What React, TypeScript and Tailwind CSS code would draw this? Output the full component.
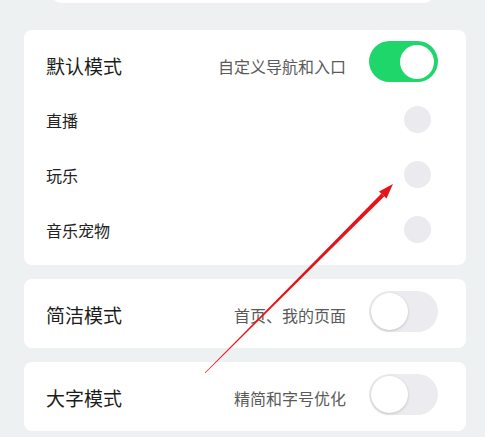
const font = { fontFamily: '"Noto Sans CJK SC", "Noto Sans", sans-serif' };

function Toggle({ on, className = "" }: { on: boolean; className?: string }) {
  if (on) {
    return (
      <div className={`flex h-[41px] w-[69px] shrink-0 items-center justify-end rounded-full bg-[#1fd66a] pr-[4px] ${className}`}>
        <div className="h-[34px] w-[34px] rounded-full bg-white" />
      </div>
    );
  }
  return (
    <div className={`flex h-[41px] w-[69px] shrink-0 items-center rounded-full bg-[#ececf0] pl-[2px] ${className}`}>
      <div className="h-[37px] w-[37px] rounded-full bg-white shadow-[0_1px_3px_rgba(0,0,0,0.18)]" />
    </div>
  );
}

function SubRow({ label }: { label: string }) {
  return (
    <div className="flex h-[55px] items-center pl-[22px] pr-[35px]">
      <span className="text-[16px] text-[#222]">{label}</span>
      <div className="ml-auto h-[27px] w-[27px] rounded-full bg-[#ebebef]" />
    </div>
  );
}

function ModeCard({ title, desc }: { title: string; desc: string }) {
  return (
    <div className="flex h-[69px] items-center rounded-[8px] bg-white pl-[22px] pr-[28px]">
      <span className="mt-[3px] text-[19px] text-[#1c1c1c]">{title}</span>
      <span className="ml-auto mr-[23px] mt-[3px] text-[16px] text-[#5a5a5a]">{desc}</span>
      <Toggle on={false} className="-mt-[4px]" />
    </div>
  );
}

export default function App() {
  return (
    <div className="relative h-[437px] w-[485px] overflow-hidden bg-[#eef1f1]" style={font}>
      <div className="mx-[50px] -mt-[20px] h-[23px] rounded-[14px] bg-white" />

      <div className="ml-[24px] mr-[19px] mt-[27px] flex flex-col gap-[14px]">
        <div className="rounded-[8px] bg-white pb-[8px]">
          <div className="flex h-[62px] items-center pl-[22px] pr-[28px]">
            <span className="mt-[10px] text-[19px] text-[#1c1c1c]">默认模式</span>
            <span className="ml-auto mr-[23px] mt-[10px] text-[16px] text-[#5a5a5a]">自定义导航和入口</span>
            <Toggle on className="mt-[1px]" />
          </div>
          <SubRow label="直播" />
          <SubRow label="玩乐" />
          <SubRow label="音乐宠物" />
        </div>

        <ModeCard title="简洁模式" desc="首页、我的页面" />
        <ModeCard title="大字模式" desc="精简和字号优化" />
      </div>

      {/* red annotation arrow */}
      <svg className="pointer-events-none absolute left-0 top-0" width="485" height="437">
        <polygon points="204.8,372.8 205.2,373.2 384.2,196.4 381.4,193.6" fill="#e5141b" />
        <polygon points="393,184 386.5,198.5 379,191.5" fill="#e5141b" />
      </svg>
    </div>
  );
}
